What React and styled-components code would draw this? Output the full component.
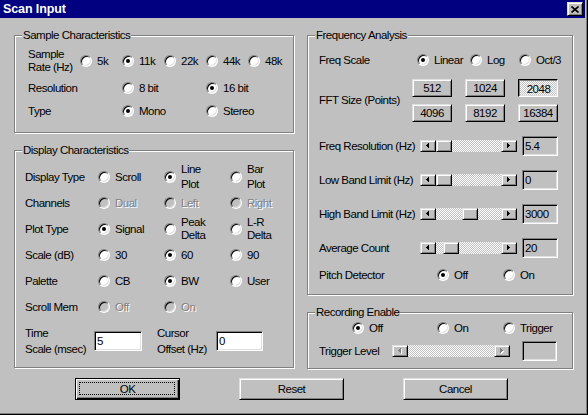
import React from 'react'
import styled, { createGlobalStyle, css } from 'styled-components'

const GlobalStyle = createGlobalStyle`
  * { box-sizing: border-box; }
  html, body { margin: 0; padding: 0; background: #c0c0c0; }
  body {
    font-family: "Liberation Sans", Arial, sans-serif;
    font-size: 11.5px;
    letter-spacing: -0.5px;
    color: #000;
  }
`;

const raised = css`
  background: #c0c0c0;
  border: 1px solid;
  border-color: #dfdfdf #000 #000 #dfdfdf;
  box-shadow: inset 1px 1px 0 #fff, inset -1px -1px 0 #808080;
`;

const sunken = css`
  border: 1px solid;
  border-color: #808080 #fff #fff #808080;
  box-shadow: inset 1px 1px 0 #000, inset -1px -1px 0 #dfdfdf;
`;

const dither = css`
  background: repeating-conic-gradient(#c0c0c0 0% 25%, #fff 0% 50%) 0 0 / 2px 2px;
`;

const Window = styled.div`
  width: 588px;
  height: 415px;
  background: #c0c0c0;
  padding: 0 3px 3px 0;
  box-shadow: inset -1px -1px 0 #000, inset -2px -2px 0 #808080;
  display: flex;
  flex-direction: column;
`;

const TitleBar = styled.div`
  height: 18px;
  background: #000080;
  display: flex;
  align-items: center;
  justify-content: space-between;
  padding: 0 2px 0 3px;
`;

const Title = styled.span`
  color: #fff;
  font-weight: bold;
  font-size: 12.5px;
  letter-spacing: -0.1px;
`;

const CloseBtn = styled.div`
  ${raised};
  width: 16px;
  height: 14px;
  display: flex;
  align-items: center;
  justify-content: center;
`;

const Body = styled.div`
  padding: 17px 0 0 14px;
  display: flex;
  flex-direction: column;
`;

const Columns = styled.div`
  display: flex;
  gap: 13px;
`;

const Column = styled.div`
  width: ${p => p.$w}px;
  display: flex;
  flex-direction: column;
  gap: 17px;
`;

const Group = styled.section`
  position: relative;
  height: ${p => p.$h}px;
  border: 1px solid #808080;
  box-shadow: inset 1px 1px 0 #fff, 1px 1px 0 #fff;
  padding: ${p => p.$pad};
`;

const Legend = styled.span`
  position: absolute;
  top: -7px;
  left: 7px;
  padding: 0 1px;
  line-height: 13px;
  background: #c0c0c0;
  white-space: nowrap;
`;

const Grid = styled.div`
  display: grid;
  grid-template-columns: ${p => p.$cols};
  grid-template-rows: ${p => p.$rows || 'auto'};
  align-items: center;
  margin-top: ${p => p.$top || 0}px;
  padding-left: ${p => p.$left || 0}px;
`;

const RowLabel = styled.span`
  grid-column: 1;
  line-height: ${p => p.$lh || 13}px;
  white-space: nowrap;
`;

const RadioWrap = styled.label`
  display: flex;
  align-items: center;
  gap: 5px;
  white-space: nowrap;
  grid-column: ${p => p.$col || 'auto'};
  ${p => p.$disabled && css`
    color: #808080;
    text-shadow: 1px 1px 0 #fff;
  `}
`;

const RadioCircle = styled.span`
  position: relative;
  flex: none;
  width: 12px;
  height: 12px;
  border-radius: 50%;
  border: 1px solid;
  border-color: #808080 #fff #fff #808080;
  box-shadow: inset 1px 1px 0 #000, inset -1px -1px 0 #dfdfdf;
  background: ${p => (p.$disabled ? '#c0c0c0' : '#fff')};
  &::after {
    content: '';
    display: ${p => (p.$checked ? 'block' : 'none')};
    position: absolute;
    left: 3px;
    top: 3px;
    width: 4px;
    height: 4px;
    border-radius: 50%;
    background: ${p => (p.$disabled ? '#808080' : '#000')};
  }
`;

const RadioText = styled.span`
  line-height: ${p => p.$lh || 13}px;
`;

const Radio = ({ checked, disabled, col, lh, children }) => (
  <RadioWrap $col={col} $disabled={disabled}>
    <RadioCircle $checked={checked} $disabled={disabled} />
    <RadioText $lh={lh}>{children}</RadioText>
  </RadioWrap>
);

const Row = styled.div`
  display: flex;
  align-items: center;
  height: ${p => p.$h}px;
  margin-top: ${p => p.$top || 0}px;
`;

const FixedLabel = styled.span`
  width: ${p => p.$w}px;
  flex: none;
  line-height: ${p => p.$lh || 13}px;
  white-space: nowrap;
  margin-left: ${p => p.$ml || 0}px;
`;

const TextBox = styled.input`
  ${sunken};
  width: ${p => p.$w}px;
  height: 20px;
  flex: none;
  margin-left: ${p => p.$ml || 0}px;
  padding: 0 2px;
  background: ${p => (p.$white ? '#fff' : '#c0c0c0')};
  font: inherit;
  letter-spacing: inherit;
  color: #000;
  outline: none;
`;

const FftGrid = styled.div`
  display: grid;
  grid-template-columns: repeat(3, 40px);
  grid-auto-rows: 18px;
  column-gap: 13px;
  row-gap: 7px;
`;

const ToolBtn = styled.div`
  ${raised};
  display: flex;
  align-items: center;
  justify-content: center;
  ${p => p.$pressed && css`
    ${dither};
    border-color: #000 #fff #fff #000;
    box-shadow: inset 1px 1px 0 #808080, inset -1px -1px 0 #dfdfdf;
    padding: 1px 0 0 1px;
  `}
`;

const Track = styled.div`
  ${dither};
  width: ${p => p.$w}px;
  height: 12px;
  flex: none;
  display: flex;
`;

const Lane = styled.div`
  flex: 1;
  display: flex;
`;

const ArrowBtn = styled.div`
  ${raised};
  width: 16px;
  height: 12px;
  flex: none;
  display: flex;
  align-items: center;
  justify-content: center;
`;

const Thumb = styled.div`
  ${raised};
  width: 16px;
  height: 12px;
  flex: none;
`;

const Arrow = ({ dir, disabled }) => {
  const pts = dir === 'left' ? '3,0 0,2.5 3,5' : '0,0 3,2.5 0,5';
  return (
    <svg width="4" height="6" viewBox="0 0 4 6" shapeRendering="crispEdges">
      {disabled && <polygon points={pts} fill="#fff" transform="translate(1 1)" />}
      <polygon points={pts} fill={disabled ? '#808080' : '#000'} />
    </svg>
  );
};

const Scrollbar = ({ width, thumb, disabled }) => (
  <Track $w={width}>
    <ArrowBtn><Arrow dir="left" disabled={disabled} /></ArrowBtn>
    <Lane>{thumb != null && <Thumb style={{ marginLeft: thumb }} />}</Lane>
    <ArrowBtn><Arrow dir="right" disabled={disabled} /></ArrowBtn>
  </Track>
);

const Footer = styled.div`
  display: flex;
  gap: 59px;
  padding-left: 61px;
  margin-top: 9px;
`;

const Button = styled.button`
  ${raised};
  position: relative;
  width: 105px;
  height: 22px;
  padding: 0;
  font: inherit;
  letter-spacing: inherit;
  color: #000;
  ${p => p.$default && css`
    border-color: #000;
    box-shadow: inset 1px 1px 0 #fff, inset -1px -1px 0 #000, inset -2px -2px 0 #808080;
    &::after {
      content: '';
      position: absolute;
      inset: 3px 4px 4px 3px;
      border: 1px dotted #000;
    }
  `}
`;

const sliders = [
  { label: 'Freq Resolution (Hz)', thumb: 0, value: '5.4' },
  { label: 'Low Band Limit (Hz)', thumb: 0, value: '0' },
  { label: 'High Band Limit (Hz)', thumb: 26, value: '3000' },
  { label: 'Average Count', thumb: 7, value: '20' },
];

const fftSizes = ['512', '1024', '2048', '4096', '8192', '16384'];

export default function App() {
  return (
    <>
      <GlobalStyle />
      <Window>
        <TitleBar>
          <Title>Scan Input</Title>
          <CloseBtn>
            <svg width="8" height="7" viewBox="0 0 8 7">
              <path d="M0.5 0.5 L7.5 6.5 M7.5 0.5 L0.5 6.5" stroke="#000" strokeWidth="1.6" />
            </svg>
          </CloseBtn>
        </TitleBar>

        <Body>
          <Columns>
            <Column $w={280}>
              <Group $h={98} $pad="11px 0 0 13px">
                <Legend>Sample Characteristics</Legend>
                <Grid $cols="52px repeat(5, 42px)" $rows="28px 26px 20px">
                  <RowLabel>Sample<br />Rate (Hz)</RowLabel>
                  <Radio>5k</Radio>
                  <Radio checked>11k</Radio>
                  <Radio>22k</Radio>
                  <Radio>44k</Radio>
                  <Radio>48k</Radio>
                  <RowLabel>Resolution</RowLabel>
                  <Radio col={3}>8 bit</Radio>
                  <Radio col={5} checked>16 bit</Radio>
                  <RowLabel>Type</RowLabel>
                  <Radio col={3} checked>Mono</Radio>
                  <Radio col={5}>Stereo</Radio>
                </Grid>
              </Group>

              <Group $h={218} $pad="13px 0 0 10px">
                <Legend>Display Characteristics</Legend>
                <Grid $cols="73px 66px 66px auto" $rows="repeat(6, 26px)">
                  <RowLabel>Display Type</RowLabel>
                  <Radio>Scroll</Radio>
                  <Radio checked lh={15}>Line<br />Plot</Radio>
                  <Radio lh={15}>Bar<br />Plot</Radio>
                  <RowLabel>Channels</RowLabel>
                  <Radio disabled>Dual</Radio>
                  <Radio disabled>Left</Radio>
                  <Radio disabled>Right</Radio>
                  <RowLabel>Plot Type</RowLabel>
                  <Radio checked>Signal</Radio>
                  <Radio>Peak<br />Delta</Radio>
                  <Radio>L-R<br />Delta</Radio>
                  <RowLabel>Scale (dB)</RowLabel>
                  <Radio>30</Radio>
                  <Radio checked>60</Radio>
                  <Radio>90</Radio>
                  <RowLabel>Palette</RowLabel>
                  <Radio>CB</Radio>
                  <Radio checked>BW</Radio>
                  <Radio>User</Radio>
                  <RowLabel>Scroll Mem</RowLabel>
                  <Radio disabled>Off</Radio>
                  <Radio disabled>On</Radio>
                </Grid>
                <Row $h={34} $top={4}>
                  <FixedLabel $w={69} $lh={16}>Time<br />Scale (msec)</FixedLabel>
                  <TextBox $w={48} $white readOnly defaultValue="5" />
                  <FixedLabel $w={59} $ml={15} $lh={16}>Cursor<br />Offset (Hz)</FixedLabel>
                  <TextBox $w={47} $white readOnly defaultValue="0" />
                </Row>
              </Group>
            </Column>

            <Column $w={266}>
              <Group $h={260} $pad="14px 0 0 11px">
                <Legend>Frequency Analysis</Legend>
                <Grid $cols="98px 53px 49px auto" $rows="20px">
                  <RowLabel>Freq Scale</RowLabel>
                  <Radio checked>Linear</Radio>
                  <Radio>Log</Radio>
                  <Radio>Oct/3</Radio>
                </Grid>
                <Row $h={43} $top={9}>
                  <FixedLabel $w={93}>FFT Size (Points)</FixedLabel>
                  <FftGrid>
                    {fftSizes.map(s => (
                      <ToolBtn key={s} $pressed={s === '2048'}>{s}</ToolBtn>
                    ))}
                  </FftGrid>
                </Row>
                <div style={{ marginTop: 7 }}>
                  {sliders.map(s => (
                    <Row key={s.label} $h={34}>
                      <FixedLabel $w={101}>{s.label}</FixedLabel>
                      <Scrollbar width={97} thumb={s.thumb} />
                      <TextBox $w={36} $ml={5} readOnly defaultValue={s.value} />
                    </Row>
                  ))}
                </div>
                <Grid $cols="118px 66px auto" $rows="20px">
                  <RowLabel>Pitch Detector</RowLabel>
                  <Radio checked>Off</Radio>
                  <Radio>On</Radio>
                </Grid>
              </Group>

              <Group $h={57} $pad="6px 0 0 11px">
                <Legend>Recording Enable</Legend>
                <Grid $cols="85px 66px auto" $rows="18px" $left={33}>
                  <Radio checked>Off</Radio>
                  <Radio>On</Radio>
                  <Radio>Trigger</Radio>
                </Grid>
                <Row $h={20} $top={4}>
                  <FixedLabel $w={73}>Trigger Level</FixedLabel>
                  <Scrollbar width={118} disabled />
                  <TextBox $w={35} $ml={12} readOnly defaultValue="" />
                </Row>
              </Group>
            </Column>
          </Columns>

          <Footer>
            <Button $default>OK</Button>
            <Button>Reset</Button>
            <Button>Cancel</Button>
          </Footer>
        </Body>
      </Window>
    </>
  );
}
